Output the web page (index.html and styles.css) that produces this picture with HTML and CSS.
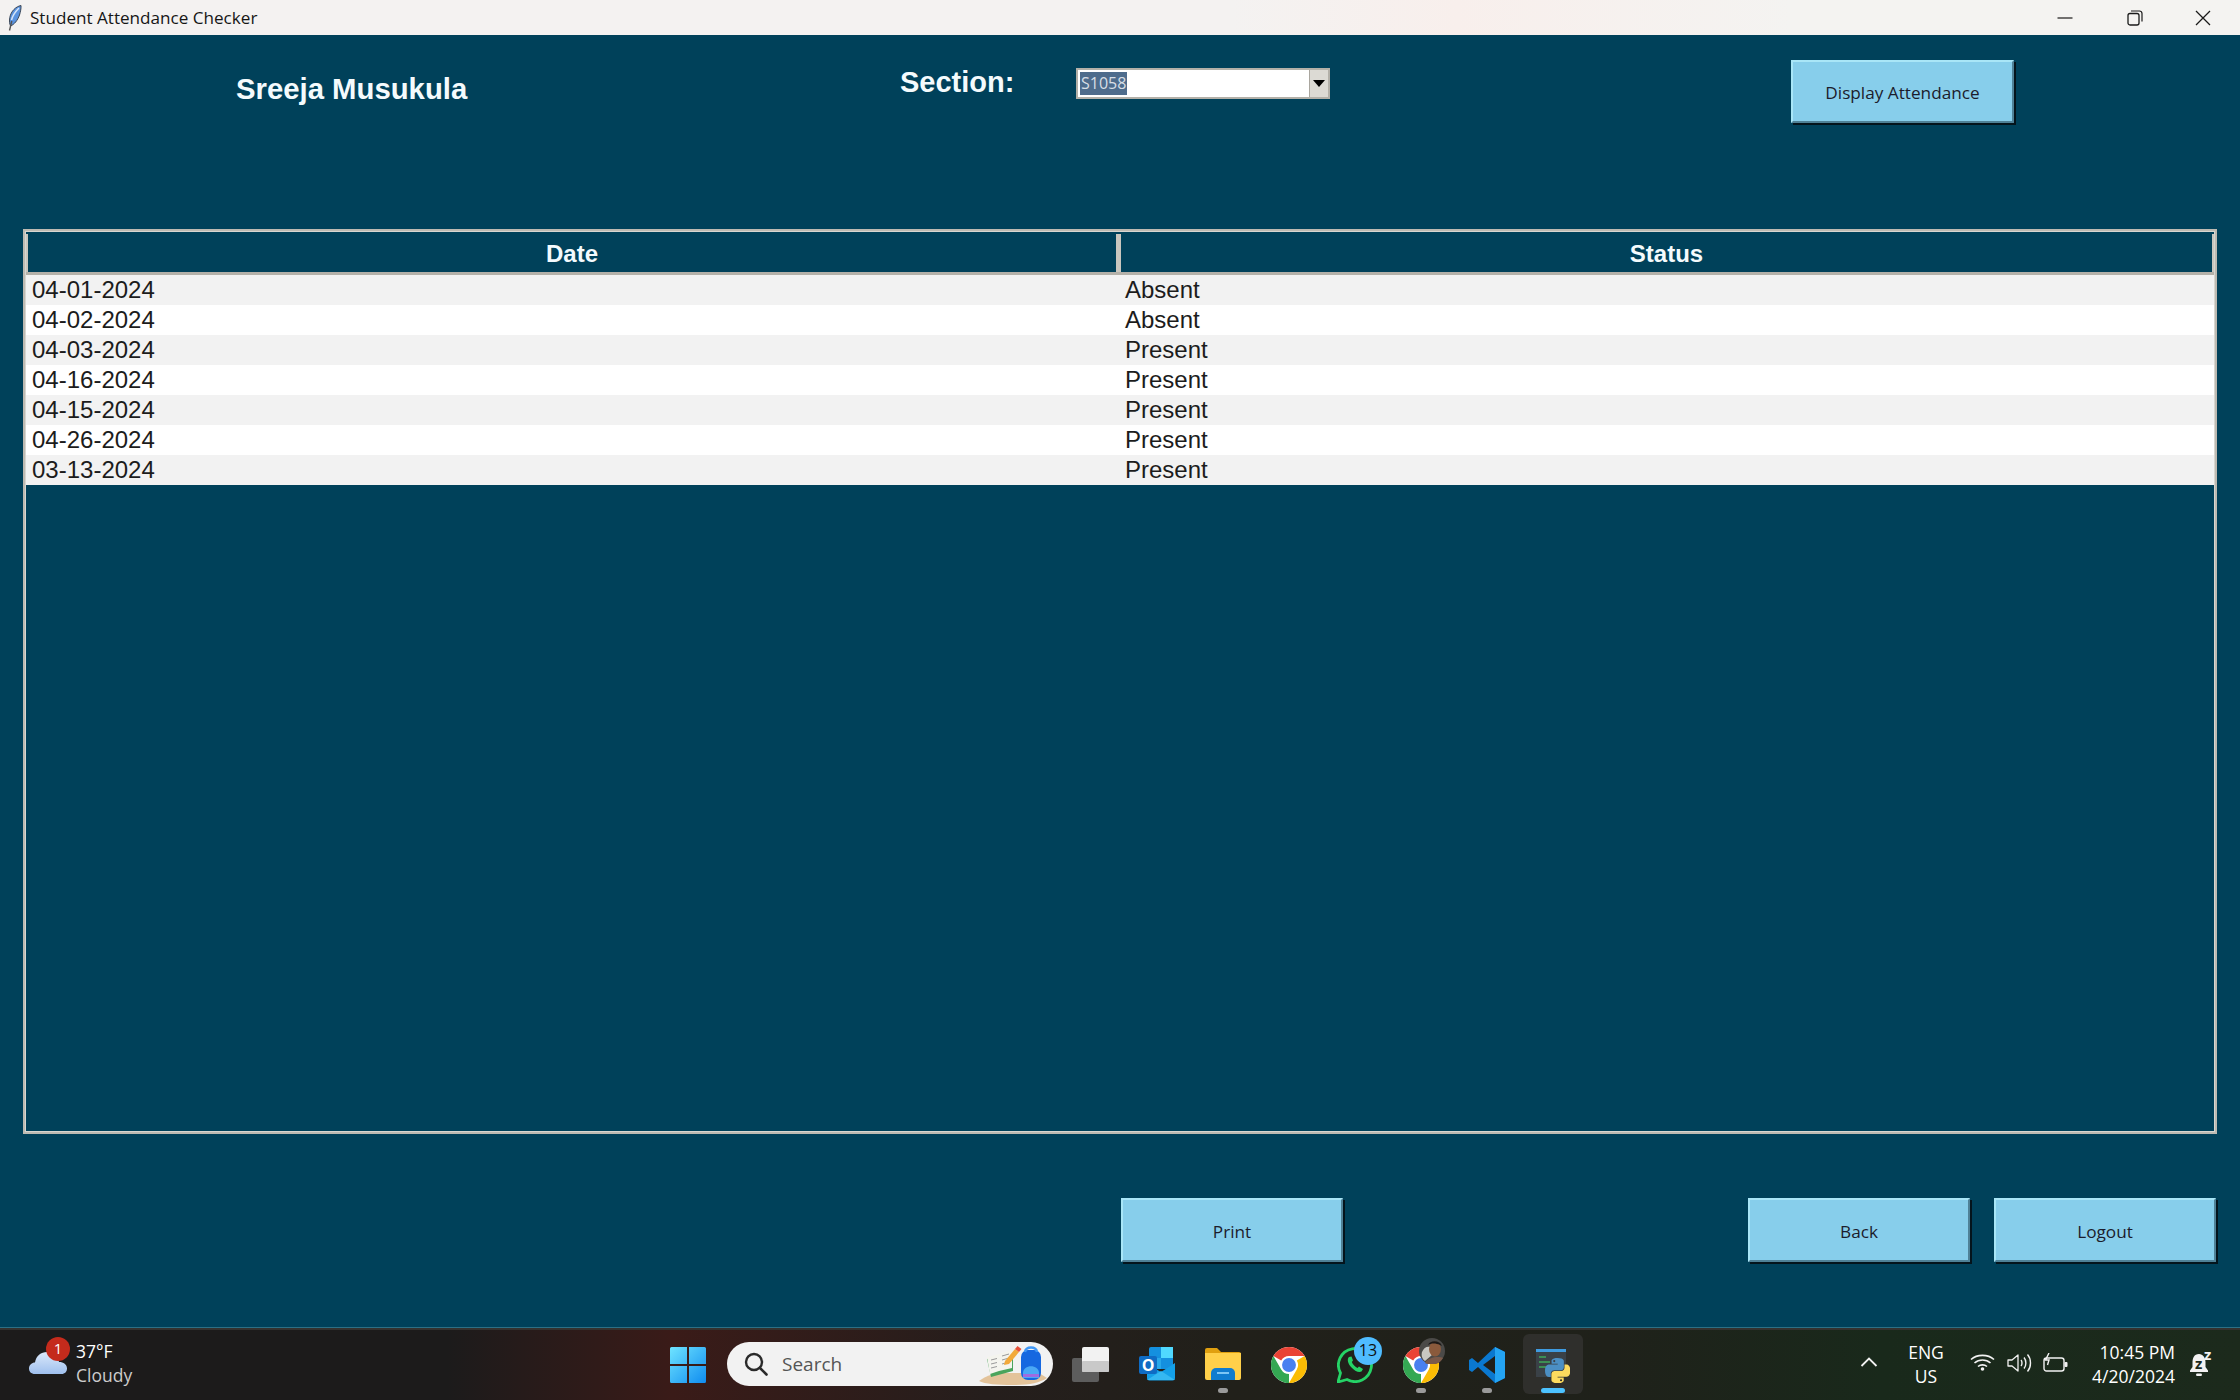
FILE: index.html
```html
<!DOCTYPE html>
<html lang="en">
<head>
<meta charset="utf-8">
<title>Student Attendance Checker</title>
<link rel="stylesheet" href="styles.css">
</head>
<body>
<div class="window">
  <header class="titlebar">
    <svg class="feather" width="14" height="26" viewBox="0 0 14 26"><path d="M13 0.500C8 1.500 3 6 1.800 12.500c-.6 3.500-.3 6.500.8 8.500 3.500-1.500 7-5.500 8.900-11 1-3.200 1.700-6.500 1.500-9.500z" fill="#5a93e0" stroke="#3a4656" stroke-width="1"/><path d="M11 3C8 6 5 9 3.500 15" fill="none" stroke="#d4e4f8" stroke-width="1.500"/><path d="M3.800 16 1.500 25.500" fill="none" stroke="#555" stroke-width="1.400"/></svg>
    <span class="title-text">Student Attendance Checker</span>
    <div class="win-controls">
      <svg width="16" height="16" viewBox="0 0 16 16"><path d="M0.500 8H15.500" stroke="#1a1a1a" stroke-width="1.200"/></svg>
      <svg width="16" height="16" viewBox="0 0 16 16"><rect x="1" y="3.500" width="11" height="11.500" rx="2" fill="none" stroke="#1a1a1a" stroke-width="1.300"/><path d="M4 1H12.500A2.500 2.500 0 0 1 15 3.500V11.500" fill="none" stroke="#1a1a1a" stroke-width="1.200"/></svg>
      <svg width="16" height="16" viewBox="0 0 16 16"><path d="M1 1 15 15M15 1 1 15" stroke="#1a1a1a" stroke-width="1.300"/></svg>
    </div>
  </header>

  <main class="main">
    <section class="top-row">
      <h1 class="student-name">Sreeja Musukula</h1>
      <label class="section-label">Section:</label>
      <div class="combobox">
        <div class="combo-field"><span class="combo-selected">S1058</span></div>
        <div class="combo-arrow"><span class="arrow-glyph"></span></div>
      </div>
      <button class="tk-button display-btn">Display Attendance</button>
    </section>

    <section class="tree">
      <div class="tree-head">
        <div class="head-cell">Date</div>
        <div class="head-cell">Status</div>
      </div>
      <div class="tree-row"><span>04-01-2024</span><span>Absent</span></div>
      <div class="tree-row"><span>04-02-2024</span><span>Absent</span></div>
      <div class="tree-row"><span>04-03-2024</span><span>Present</span></div>
      <div class="tree-row"><span>04-16-2024</span><span>Present</span></div>
      <div class="tree-row"><span>04-15-2024</span><span>Present</span></div>
      <div class="tree-row"><span>04-26-2024</span><span>Present</span></div>
      <div class="tree-row"><span>03-13-2024</span><span>Present</span></div>
    </section>

    <section class="actions">
      <button class="tk-button action-btn print-btn">Print</button>
      <button class="tk-button action-btn back-btn">Back</button>
      <button class="tk-button action-btn logout-btn">Logout</button>
    </section>
  </main>

  <footer class="taskbar">
    <div class="weather">
      <div class="weather-icon">
        <svg width="38" height="26" viewBox="0 0 38 26"><defs><linearGradient id="cl" x1="0" y1="0" x2="0" y2="1"><stop offset="0" stop-color="#dbe9fb"/><stop offset="1" stop-color="#9fc0ee"/></linearGradient></defs><path d="M6 25C2 25 0 22.500 0 19.500 0 16 3 13.500 6 13.500 7 7 12 3 18 3c6.500 0 11 4 12 10 4.500 0 8 2.500 8 6.500 0 3-2 5.500-5.500 5.500z" fill="url(#cl)"/></svg>
        <span class="weather-badge">1</span>
      </div>
      <div class="weather-text">
        <span class="temp">37°F</span>
        <span class="cond">Cloudy</span>
      </div>
    </div>

    <div class="task-center">
      <div class="start">
        <svg width="36" height="36" viewBox="0 0 36 36"><defs><linearGradient id="wn" x1="0" y1="0" x2="1" y2="1"><stop offset="0" stop-color="#6fe4ff"/><stop offset="1" stop-color="#0f8cf0"/></linearGradient></defs><path d="M1.500 0H17V17H0V1.500A1.500 1.500 0 0 1 1.500 0ZM19 0H34.500A1.500 1.500 0 0 1 36 1.500V17H19ZM0 19H17V36H1.500A1.500 1.500 0 0 1 0 34.500ZM19 19H36V34.500A1.500 1.500 0 0 1 34.500 36H19Z" fill="url(#wn)"/></svg>
      </div>
      <div class="search-pill">
        <svg class="search-icon" width="24" height="24" viewBox="0 0 24 24"><circle cx="10" cy="10" r="8" fill="none" stroke="#2a2a2a" stroke-width="2.400"/><path d="M16 16 22.500 22.500" stroke="#2a2a2a" stroke-width="2.600" stroke-linecap="round"/></svg>
        <span class="search-text">Search</span>
        <svg class="search-art" width="68" height="40" viewBox="0 0 68 40"><path d="M0 36C8 30 16 28 28 28H60L68 33C60 38 50 40 34 40 18 40 6 39 0 36Z" fill="#e3c39a"/><path d="M8 14 34 8V26L12 32Z" fill="#4aa45c"/><path d="M8 12 20 9 33 5V23L20 26 11 29Z" fill="#f4f4ee"/><path d="M12 15 18 13.500M12 19 18 17.500M12 23 18 21.500M23 11 30 9M23 15 30 13M23 19 30 17" stroke="#9a9a9a" stroke-width="1"/><path d="M26 16 36 4 40 7 30 19 25 20Z" fill="#f2a93a"/><path d="M36 4 38.500 1 42.500 4 40 7Z" fill="#e8503a"/><rect x="42" y="5" width="20" height="30" rx="7" fill="#1668e0"/><path d="M46 7C47 1 57 1 58 7" fill="none" stroke="#3f97f5" stroke-width="2.500"/><path d="M44 28C44 19 60 19 60 28V33H44Z" fill="#4aa8f5"/><rect x="44" y="29" width="16" height="3" fill="#a06be0"/></svg>
      </div>
      <div class="task-slot">
        <svg width="38" height="36" viewBox="0 0 38 36"><rect x="0" y="11" width="27" height="24" rx="2" fill="#5d5d5d"/><rect x="10" y="0" width="27" height="25" rx="2" fill="#f2f2f2"/><rect x="10" y="14" width="27" height="11" rx="1" fill="#c9c9c9"/></svg>
      </div>
      <div class="task-slot">
        <svg width="36" height="34" viewBox="0 0 36 34"><rect x="10" y="0" width="24" height="22" rx="2" fill="#1490df"/><rect x="22" y="0" width="12" height="11" fill="#50d9ff"/><rect x="10" y="11" width="12" height="11" fill="#28a8ea"/><path d="M8 17 22 25 36 16V31A2.500 2.500 0 0 1 33.500 33.500H10.500A2.500 2.500 0 0 1 8 31Z" fill="#14a0e8"/><path d="M8 33 22 24 36 33Z" fill="#35b8f1"/><rect x="0" y="9" width="18" height="18" rx="2" fill="#0f6cc4"/><text x="9" y="23.500" text-anchor="middle" class="svg-o">O</text></svg>
      </div>
      <div class="task-slot has-dot">
        <svg width="36" height="33" viewBox="0 0 36 33"><path d="M0 3A2 2 0 0 1 2 1H12L16 5H34A2 2 0 0 1 36 7V12H0Z" fill="#e0a010"/><path d="M0 6H36V31A2 2 0 0 1 34 33H2A2 2 0 0 1 0 31Z" fill="#ffd04a"/><path d="M6 33V26A5 5 0 0 1 11 21H25A5 5 0 0 1 30 26V33Z" fill="#0f7ccf"/><rect x="12" y="25" width="12" height="2" fill="#7cc6f5"/></svg>
      </div>
      <div class="task-slot">
        <svg class="chrome" width="36" height="36" viewBox="2 2 44 44"><circle cx="24" cy="24" r="22" fill="#fff"/><path d="M4.950 13A22 22 0 0 1 43.050 13H24a11 11 0 0 0-9.530 5.500z" fill="#ea4335"/><path transform="rotate(120 24 24)" d="M4.950 13A22 22 0 0 1 43.050 13H24a11 11 0 0 0-9.530 5.500z" fill="#fbbc04"/><path transform="rotate(240 24 24)" d="M4.950 13A22 22 0 0 1 43.050 13H24a11 11 0 0 0-9.530 5.500z" fill="#34a853"/><circle cx="24" cy="24" r="8.500" fill="#4a80f0"/></svg>
      </div>
      <div class="task-slot">
        <svg width="36" height="36" viewBox="0 0 36 36"><path d="M1 35 3.500 26A16.500 16.500 0 1 1 10 32.500Z" fill="none" stroke="#25d366" stroke-width="2.800" stroke-linejoin="round"/><path d="M12 10C10 12 10.500 16 14 20 17.500 24 22 26 24.500 24.500L26 22 22 19.500 20.500 21C18.500 20 15.500 17.500 14.800 15L16 13.500 14.500 9.500Z" fill="#25d366"/></svg>
        <span class="wa-badge">13</span>
      </div>
      <div class="task-slot has-dot">
        <svg class="chrome" width="36" height="36" viewBox="2 2 44 44"><circle cx="24" cy="24" r="22" fill="#fff"/><path d="M4.950 13A22 22 0 0 1 43.050 13H24a11 11 0 0 0-9.530 5.500z" fill="#ea4335"/><path transform="rotate(120 24 24)" d="M4.950 13A22 22 0 0 1 43.050 13H24a11 11 0 0 0-9.530 5.500z" fill="#fbbc04"/><path transform="rotate(240 24 24)" d="M4.950 13A22 22 0 0 1 43.050 13H24a11 11 0 0 0-9.530 5.500z" fill="#34a853"/><circle cx="24" cy="24" r="8.500" fill="#4a80f0"/></svg>
        <svg class="avatar" width="26" height="26" viewBox="0 0 26 26"><circle cx="13" cy="13" r="13" fill="#4b4a48"/><path d="M3 14C5 9 8 8 12 9L13 17 6 23C3 21 2 17 3 14Z" fill="#c9c7c2"/><ellipse cx="16" cy="11" rx="6" ry="7.500" fill="#8a5a3c"/><path d="M9 7C11 2 21 2 23 8L21 7C17 5 12 5 9 7Z" fill="#1d1a18"/><path d="M6 25C9 19 20 18 24 20A13 13 0 0 1 6 25Z" fill="#7b5a4a"/></svg>
      </div>
      <div class="task-slot has-dot">
        <svg width="36" height="36" viewBox="0 0 36 36"><path d="M26 0 36 5V31L26 36 9 20 3 25 0 23V13L3 11 9 16Z" fill="#0a78d0"/><path d="M26 0 36 5V31L26 36Z" fill="#24a4f3"/><path d="M26 9V27L14 18Z" fill="#201f1a"/></svg>
      </div>
      <div class="task-slot active-slot">
        <svg width="34" height="34" viewBox="0 0 34 34"><rect x="0" y="0" width="30" height="28" fill="#3a4147"/><rect x="0" y="0" width="30" height="3" fill="#3f9be0"/><path d="M3 8H10M3 13H14M3 18H12" stroke="#3fa85a" stroke-width="1.500"/><g transform="translate(9 9) scale(.23)"><path d="M54.900 0C26.900 0 28.600 12.200 28.600 12.200v12.600h26.700v3.800H18C18 28.600 0 26.500 0 54.800s15.700 27.300 15.700 27.300h9.400V69s-.5-15.700 15.400-15.700h26.600s14.900.2 14.900-14.400V14.700S84.300 0 54.900 0zM40.200 8.500a4.800 4.800 0 1 1 0 9.600 4.800 4.800 0 0 1 0-9.600z" fill="#4b8fc4"/><path transform="rotate(180 55 55)" d="M54.900 0C26.900 0 28.600 12.200 28.600 12.200v12.600h26.700v3.800H18C18 28.600 0 26.500 0 54.800s15.700 27.300 15.700 27.300h9.400V69s-.5-15.700 15.400-15.700h26.600s14.900.2 14.900-14.400V14.700S84.300 0 54.900 0zM40.200 8.500a4.800 4.800 0 1 1 0 9.600 4.800 4.800 0 0 1 0-9.600z" fill="#fddb5e"/></g></svg>
        <span class="active-bar"></span>
      </div>
    </div>

    <div class="tray">
      <svg class="chevron" width="18" height="10" viewBox="0 0 18 10"><path d="M1.500 9 9 1.500 16.500 9" fill="none" stroke="#f2f2f2" stroke-width="1.800"/></svg>
      <div class="lang"><span>ENG</span><span>US</span></div>
      <svg class="tray-icon wifi" width="25" height="18" viewBox="0 0 25 18"><path d="M1 6.500C7 1 18 1 24 6.500M4.500 10C9 6 16 6 20.500 10M8 13.500C10.500 11.300 14.500 11.300 17 13.500" fill="none" stroke="#f2f2f2" stroke-width="1.600"/><circle cx="12.500" cy="16" r="1.800" fill="#f2f2f2"/></svg>
      <svg class="tray-icon speaker" width="25" height="20" viewBox="0 0 25 20"><path d="M1 7H5L11 2V18L5 13H1Z" fill="none" stroke="#f2f2f2" stroke-width="1.300" stroke-linejoin="round"/><path d="M14 7C15.300 8.500 15.300 11.500 14 13M17 4.500C19.500 7.500 19.500 12.500 17 15.500M20.500 1.500C24.500 6 24.500 14 20.500 18.500" fill="none" stroke="#f2f2f2" stroke-width="1.400"/></svg>
      <svg class="tray-icon battery" width="25" height="20" viewBox="0 0 25 20"><rect x="1" y="5" width="20" height="13" rx="2.500" fill="none" stroke="#f2f2f2" stroke-width="1.400"/><rect x="21.500" y="9" width="3" height="5" rx="1" fill="#f2f2f2"/><path d="M6 0 2.500 7H6L4.500 12" fill="none" stroke="#f2f2f2" stroke-width="1.400"/></svg>
      <div class="clock"><span>10:45 PM</span><span>4/20/2024</span></div>
      <div class="bell">
        <svg width="22" height="24" viewBox="0 0 22 24"><path d="M10 1C5 1 3.500 5 3.500 10V14L1 17.500V19H19V17.500L16.500 14V9C16.500 5 14 1 10 1Z" fill="#f2f2f2"/><rect x="7" y="20.500" width="6" height="2.500" rx="1.200" fill="#f2f2f2"/></svg>
        <span class="zz-a">z</span><span class="zz-b">z</span>
      </div>
    </div>
  </footer>
</div>
</body>
</html>
```
FILE: styles.css
```css
* { box-sizing: border-box; }
html, body { margin: 0; padding: 0; }
body { width: 2240px; height: 1400px; overflow: hidden; font-family: "Liberation Sans", Arial, sans-serif; }
.window { display: flex; flex-direction: column; width: 2240px; height: 1400px; }

/* title bar */
.titlebar { flex: 0 0 35px; display: flex; align-items: center; padding-left: 8px; background: linear-gradient(90deg, #f4f2f1 0%, #f4f2f1 55%, #f8efec 65%, #f4f3f1 80%); }
.feather { flex: none; margin-top: 1px; }
.title-text { margin-left: 8px; font: 17.1px "Open Sans", "Noto Sans", sans-serif; color: #161616; white-space: nowrap; }
.win-controls { margin-left: auto; display: flex; gap: 53px; padding-right: 29px; }
.win-controls svg:nth-child(2) { margin-left: 1px; }
.win-controls svg:nth-child(3) { margin-left: -1px; }

/* main */
.main { flex: 0 0 1293px; padding: 0 23px; background: #00415a; border-bottom: 1px solid #2c7085; }
.top-row { display: flex; align-items: flex-start; height: 194px; }
.student-name { margin: 37px 0 0 213px; width: 664px; font-size: 29.3px; font-weight: 700; line-height: 33px; color: #f4fbfd; }
.section-label { margin-top: 31px; width: 176px; font-size: 29px; font-weight: 700; line-height: 33px; color: #f4fbfd; }
.combobox { margin-top: 33px; display: flex; width: 254px; height: 31px; border: 2px solid #b3b0a8; background: #fff; }
.combo-field { flex: 1; padding: 2px; }
.combo-selected { display: inline-block; height: 23px; padding: 0 1px; font: 16px/23px "Open Sans", sans-serif; background: #4e6c8c; color: #d8dfe6; }
.combo-arrow { flex: 0 0 19px; display: flex; align-items: center; justify-content: center; background: #dcdad4; border-left: 1px solid #a9a69e; }
.arrow-glyph { width: 0; height: 0; border: 6px solid transparent; border-top: 7px solid #000; border-bottom: 0; }

.tk-button { width: 223px; padding: 2px 0 0; background: #87ceeb; border-style: solid; border-width: 2px; border-color: #a9e6f7 #4f8298 #4f8298 #a9e6f7; box-shadow: 2px 2px 0 #04141c; color: #1c1c2c; font: 17.2px "Open Sans", "Noto Sans", sans-serif; }
.display-btn { margin: 25px 0 0 461px; height: 63px; }

/* treeview */
.tree { height: 905px; border: 2px solid #bdbab2; outline: 1px solid #d8d6d0; outline-offset: -3px; padding-top: 3px; }
.tree-head { display: grid; grid-template-columns: 1091px 1fr; height: 41px; border-bottom: 3px solid #b4b1a9; }
.head-cell { display: flex; align-items: center; justify-content: center; font-size: 24px; font-weight: 700; color: #f4fbfd; border-left: 3px solid #c9c6be; padding-top: 1px; }
.head-cell:last-child { border-left-width: 5px; border-right: 3px solid #c9c6be; }
.tree-row { display: grid; grid-template-columns: 1093px 1fr; height: 30px; padding-left: 7px; font-size: 24px; line-height: 30px; color: #1c1c1c; background: #f2f2f2; }
.tree-row:nth-child(odd) { background: #fff; }

.actions { display: flex; padding: 64px 0 0 1098px; }
.action-btn { width: 222px; height: 64px; }
.back-btn { margin-left: 405px; }
.logout-btn { margin-left: 24px; }

/* taskbar */
.taskbar { flex: 0 0 72px; display: flex; align-items: stretch; border-top: 2px solid #34322f; color: #fff; font-family: "Open Sans", "Noto Sans", sans-serif; background: linear-gradient(90deg, #1c1b1b 0%, #1c1b1b 20%, #3a1b18 30%, #251e1c 44%, #21201a 55%, #1f211a 72%, #19291b 84%, #1c2a1c 100%); }
.weather { flex: 0 0 655px; display: flex; padding: 13px 0 0 29px; }
.weather-icon { position: relative; width: 47px; padding-top: 6px; }
.weather-badge { position: absolute; left: 17px; top: -6px; width: 24px; height: 24px; border-radius: 50%; background: #c42b1c; font-size: 15px; line-height: 22px; text-align: center; }
.weather-text { display: flex; flex-direction: column; font-size: 17.5px; line-height: 24px; margin-top: -4px; }
.cond { color: #ccc; }

.task-center { flex: 0 0 1183px; display: flex; align-items: flex-start; }
.start { flex: 0 0 72px; padding: 17px 0 0 15px; }
.search-pill { flex: 0 0 326px; margin-top: 12px; height: 44px; display: flex; align-items: center; padding: 0 6px 0 17px; border-radius: 22px; background: #f2f2f2; }
.search-text { margin-left: 14px; font-size: 19px; color: #555; }
.search-art { margin-left: auto; margin-top: 2px; }
.task-slot { position: relative; flex: 0 0 66px; height: 70px; display: flex; justify-content: center; padding-top: 17px; }
.task-slot:nth-child(3) { margin-left: 5px; }
.svg-o { font: 700 16px "Open Sans", sans-serif; fill: #fff; }
.has-dot::after { content: ""; position: absolute; left: 28px; top: 58px; width: 10px; height: 5px; border-radius: 3px; background: #9a9a9a; }
.wa-badge { position: absolute; left: 32px; top: 7px; width: 28px; height: 28px; border-radius: 50%; background: #4fbcff; color: #101010; font-size: 16px; line-height: 27px; text-align: center; }
.avatar { position: absolute; left: 31px; top: 8px; }
.active-slot { padding-top: 19px; }
.active-slot::before { content: ""; position: absolute; left: 3px; top: 4px; width: 60px; height: 60px; border-radius: 6px; background: #2f2f2c; }
.active-slot svg { position: relative; }
.active-bar { position: absolute; left: 21px; top: 58px; width: 24px; height: 5px; border-radius: 3px; background: #4cc2ff; }

.tray { flex: 1; display: flex; align-items: flex-start; padding-left: 22px; font-size: 17.5px; }
.chevron { margin-top: 27px; }
.lang { margin: 10px 0 0 25px; width: 46px; display: flex; flex-direction: column; align-items: center; line-height: 24px; }
.tray-icon { margin-top: 23px; }
.wifi { margin-left: 21px; }
.speaker { margin-left: 12px; }
.battery { margin-left: 11px; }
.clock { margin: 10px 0 0 24px; width: 83px; display: flex; flex-direction: column; align-items: flex-end; line-height: 24px; white-space: nowrap; }
.bell { position: relative; margin: 23px 0 0 14px; }
.zz-a, .zz-b { position: absolute; font-size: 15px; font-weight: 700; line-height: 12px; }
.zz-a { left: 6px; top: 4px; color: #1c2a1c; }
.zz-b { left: 15px; top: -5px; color: #f2f2f2; }
```
